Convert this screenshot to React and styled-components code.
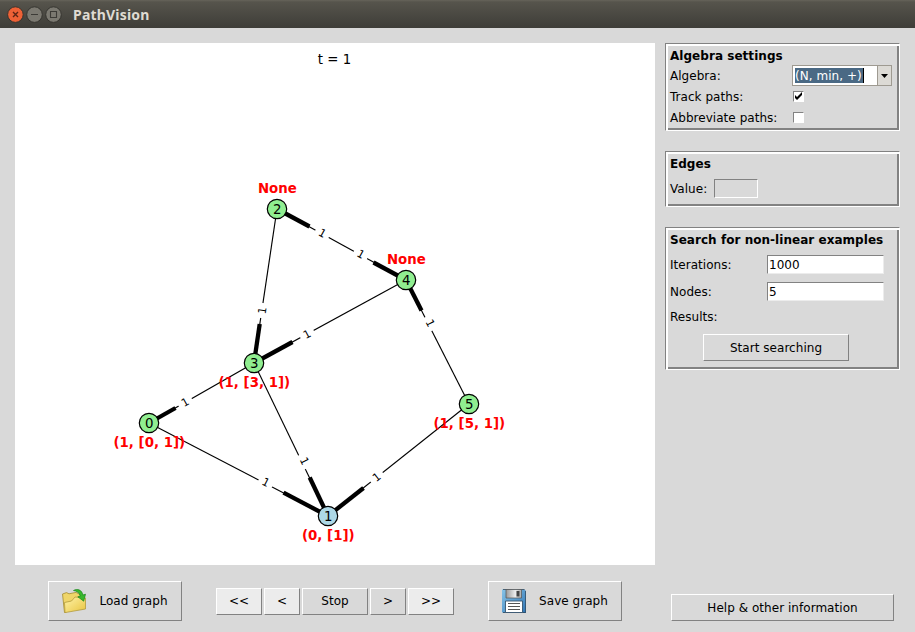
import React from "react";
import styled, { createGlobalStyle } from "styled-components";

const Global = createGlobalStyle`
  * { box-sizing: border-box; }
  body { margin: 0; background: #d9d9d9; overflow: hidden; }
  button, input { font: inherit; color: inherit; letter-spacing: inherit; border-radius: 0; margin: 0; padding: 0; }
`;

const Window = styled.div`
  width: 915px;
  height: 632px;
  display: flex;
  flex-direction: column;
  background: #d9d9d9;
  color: #000;
  font: 12px/16px "DejaVu Sans", sans-serif;
  letter-spacing: 0.04px;
  white-space: nowrap;
`;

const TitleBar = styled.header`
  height: 28px;
  flex: none;
  display: flex;
  align-items: center;
  padding-left: 7px;
  background: linear-gradient(#66635a 0, #56544c 2px, #3e3d38 100%);
`;

const WindowControls = styled.svg`
  width: 56px;
  height: 18px;
  flex: none;
  position: relative;
  top: 1px;
`;

const Title = styled.h1`
  margin: 0 0 0 10px;
  font: bold 14px/20px "Noto Sans", sans-serif;
  letter-spacing: 0.2px;
  color: #dfdbd2;
  position: relative;
  top: 1px;
`;

const Body = styled.main`
  flex: 1;
  display: grid;
  grid-template-columns: 640px 235px;
  grid-template-rows: 522px 1fr;
  column-gap: 10px;
  padding: 15px 15px 0 15px;
`;

const Canvas = styled.svg`
  display: block;
  width: 640px;
  height: 522px;
  background: #fff;
  font-family: "DejaVu Sans", sans-serif;
  letter-spacing: 0;
`;

const Sidebar = styled.aside`
  display: flex;
  flex-direction: column;
`;

const Panel = styled.section`
  height: ${(p) => p.$height}px;
  margin-bottom: ${(p) => p.$gap || 0}px;
  padding: 4px 4px 0;
  border: 1px solid;
  border-color: #828282 #fff #fff #828282;
  box-shadow: inset 2px 2px #fff, inset -2px -2px #828282;
`;

const PanelTitle = styled.h2`
  margin: 0;
  font: bold 12px/16px "DejaVu Sans", sans-serif;
`;

const Field = styled.div`
  display: grid;
  grid-template-columns: ${(p) => p.$label}px 1fr;
  align-items: center;
  height: ${(p) => p.$height}px;
`;

const Combo = styled.div`
  display: flex;
  width: 100px;
  height: 21px;
  border: 1px solid #9e9a91;
  background: #fff;
`;

const ComboValue = styled.div`
  flex: 1;
  padding: 2px 0 0 2px;
`;

const Selection = styled.span`
  display: block;
  width: 69px;
  height: 15px;
  line-height: 16px;
  color: #fff;
  background: #4a6984;
  border-right: 1px solid #000;
`;

const ComboArrow = styled.div`
  width: 14px;
  display: flex;
  align-items: center;
  justify-content: center;
  background: #dcdad5;
  border-left: 1px solid #9e9a91;
`;

const Check = styled.span`
  width: 11px;
  height: 11px;
  display: flex;
  background: #fff;
  border: 1px solid;
  border-color: #828282 #fff #fff #828282;
`;

const Entry = styled.input`
  width: ${(p) => p.$width}px;
  height: 19px;
  outline: none;
  padding-left: 1px;
  background: ${(p) => (p.$disabled ? "#d9d9d9" : "#fff")};
  border: 1px solid;
  border-color: ${(p) =>
    p.$disabled ? "#828282 #fff #fff #828282" : "#828282 #ececec #ececec #828282"};
`;

const Button = styled.button`
  display: flex;
  align-items: center;
  justify-content: center;
  gap: 13px;
  width: ${(p) => p.$width}px;
  height: ${(p) => p.$height || 27}px;
  background: ${(p) => (p.$active ? "#ececec" : "#d9d9d9")};
  border: 1px solid;
  border-color: #fff #828282 #828282 #fff;
`;

const SearchAction = styled.div`
  padding: 2px 0 0 33px;
`;

const Controls = styled.div`
  display: flex;
  align-items: center;
  height: 40px;
  margin: 16px 0 0 33px;
`;

const Steps = styled.div`
  display: flex;
  gap: 2px;
  margin: 0 34px;
`;

const HelpArea = styled.div`
  padding: 29px 0 0 6px;
`;

const Icon = styled.svg`
  width: 24px;
  height: 24px;
`;

const nodes = [
  { id: 0, x: 149, y: 423, label: "(1, [0, 1])", ly: 447 },
  { id: 1, x: 328, y: 516, label: "(0, [1])", ly: 540, source: true },
  { id: 2, x: 277, y: 209, label: "None", ly: 193 },
  { id: 3, x: 254, y: 363, label: "(1, [3, 1])", ly: 387 },
  { id: 4, x: 406, y: 280, label: "None", ly: 264 },
  { id: 5, x: 469, y: 404, label: "(1, [5, 1])", ly: 428 },
];

const edges = [
  { from: 2, to: 4, heads: [[2, 309.5, 226.5], [4, 373.5, 262.5]], marks: [[322.5, 233], [361, 254]] },
  { from: 3, to: 2, heads: [[3, 259.7, 324]], marks: [[262, 310.5]] },
  { from: 3, to: 4, heads: [[3, 292.5, 342]], marks: [[307, 334]] },
  { from: 0, to: 3, heads: [[0, 175.5, 408]], marks: [[185, 402]] },
  { from: 0, to: 1, heads: [[1, 283.5, 492.7]], marks: [[266, 482]] },
  { from: 3, to: 1, heads: [[1, 309.7, 477.5]], marks: [[304.5, 461]] },
  { from: 4, to: 5, heads: [[4, 421.5, 310.5]], marks: [[430.5, 323]] },
  { from: 1, to: 5, heads: [[1, 363.5, 488]], marks: [[376.5, 477]] },
];

function Edge({ edge }) {
  const a = nodes[edge.from];
  const b = nodes[edge.to];
  const angle = (Math.atan2(b.y - a.y, b.x - a.x) * 180) / Math.PI;
  return (
    <g>
      <line x1={a.x} y1={a.y} x2={b.x} y2={b.y} stroke="#000" strokeWidth="1.15" />
      {edge.heads.map(([id, x, y]) => (
        <line key={id} x1={nodes[id].x} y1={nodes[id].y} x2={x} y2={y} stroke="#000" strokeWidth="4.3" />
      ))}
      {edge.marks.map(([x, y]) => (
        <g key={x} transform={`translate(${x} ${y}) rotate(${angle})`}>
          <rect x="-7.6" y="-7" width="15.2" height="14" fill="#fff" />
          <text y="4" fontSize="11" textAnchor="middle">1</text>
        </g>
      ))}
    </g>
  );
}

function Graph() {
  return (
    <Canvas viewBox="15 43 640 522">
      <text x="334.5" y="64" fontSize="13.33" textAnchor="middle">t = 1</text>
      {edges.map((e) => <Edge key={`${e.from}-${e.to}`} edge={e} />)}
      {nodes.map((n) => (
        <g key={n.id} textAnchor="middle" fontSize="13.33">
          <circle cx={n.x} cy={n.y} r="9.7" fill={n.source ? "#add8e6" : "#90ee90"} stroke="#000" strokeWidth="1.2" />
          <text x={n.x + 0.3} y={n.y + 4.5}>{n.id}</text>
          <text x={n.x + 0.3} y={n.ly} fill="#f00" fontWeight="bold">{n.label}</text>
        </g>
      ))}
    </Canvas>
  );
}

function FolderIcon() {
  return (
    <Icon viewBox="0 0 24 24">
      <defs>
        <linearGradient id="folder" x1="0" y1="0" x2="1" y2="1">
          <stop offset="0" stopColor="#fff3a8" />
          <stop offset="1" stopColor="#e8c440" />
        </linearGradient>
      </defs>
      <path d="M.5 5 4.5 3.6l2.5 1.2L14 3.4l5 2.6v12L2.5 23.5Z" fill="#efd569" stroke="#a58b30" strokeWidth=".8" />
      <path d="M2.5 13.5 9.5 12l3.5-4L23.5 9v11L3 23.6Z" fill="url(#folder)" stroke="#b39a3b" strokeWidth=".8" />
      <path d="M11.5 1.5C15-.6 20 .6 20.8 6l2.7-.8-1.8 7L15.8 7.8l2.5-.6C17.5 3.5 14.8 2 11.5 1.5Z" fill="#39b82c" stroke="#17851a" strokeWidth=".7" />
    </Icon>
  );
}

function FloppyIcon() {
  return (
    <Icon viewBox="0 0 24 24">
      <defs>
        <linearGradient id="floppy" x1="0" y1="0" x2="1" y2="1">
          <stop offset="0" stopColor="#87c4e8" />
          <stop offset="1" stopColor="#2f75b5" />
        </linearGradient>
        <linearGradient id="shutter">
          <stop offset="0" stopColor="#999" />
          <stop offset=".6" stopColor="#eee" />
          <stop offset="1" stopColor="#aaa" />
        </linearGradient>
      </defs>
      <path d="M0 .5h22.5L24 2v22H1l-1-1Z" fill="url(#floppy)" />
      <path d="M1 .5h21.5M23.6 2v21.5H1" fill="none" stroke="#30475c" strokeWidth=".8" />
      <path d="M4 .5h15.5V9H4Z" fill="url(#shutter)" stroke="#555" strokeWidth=".7" />
      <path d="M14.5 2h3v5.5h-3Z" fill="#444" />
      <path d="M3.5 12h17v11.5h-17Z" fill="#fff" stroke="#35536e" strokeWidth=".9" />
      <path d="M6 14.5h12M6 17.5h12M6 20.5h12" stroke="#555" />
    </Icon>
  );
}

function TitleControls() {
  return (
    <WindowControls viewBox="0 0 56 18">
      <circle cx="8.4" cy="8.6" r="7.8" fill="#ee6136" stroke="#35342f" />
      <circle cx="27.5" cy="8.6" r="7.8" fill="#7b7971" stroke="#35342f" />
      <circle cx="46.5" cy="8.6" r="7.8" fill="#7b7971" stroke="#35342f" />
      <path d="m6 6 5 5m0-5-5 5" stroke="#5d2515" strokeWidth="1.4" />
      <path d="M24 8.5h7M43.5 5.5h6v6h-6Z" fill="none" stroke="#3c3b37" strokeWidth="1.1" />
    </WindowControls>
  );
}

export default function App() {
  return (
    <Window>
      <Global />
      <TitleBar>
        <TitleControls />
        <Title>PathVision</Title>
      </TitleBar>
      <Body>
        <Graph />
        <Sidebar>
          <Panel $height={88} $gap={20}>
            <PanelTitle>Algebra settings</PanelTitle>
            <Field $label={122} $height={23}>
              <span>Algebra:</span>
              <Combo>
                <ComboValue><Selection>(N, min, +)</Selection></ComboValue>
                <ComboArrow>
                  <svg width="7" height="4" viewBox="0 0 7 4"><path d="M0 0h7L3.5 4Z" /></svg>
                </ComboArrow>
              </Combo>
            </Field>
            <Field $label={123} $height={19}>
              <span>Track paths:</span>
              <Check>
                <svg width="9" height="9" viewBox="0 0 9 9"><path d="M1 3v3l2 2 5-5V0L3 5Z" /></svg>
              </Check>
            </Field>
            <Field $label={123} $height={23}>
              <span>Abbreviate paths:</span>
              <Check />
            </Field>
          </Panel>
          <Panel $height={56} $gap={20}>
            <PanelTitle>Edges</PanelTitle>
            <Field $label={44} $height={33}>
              <span>Value:</span>
              <Entry $width={44} $disabled readOnly />
            </Field>
          </Panel>
          <Panel $height={143}>
            <PanelTitle>Search for non-linear examples</PanelTitle>
            <Field $label={97} $height={33}>
              <span>Iterations:</span>
              <Entry $width={117} defaultValue="1000" />
            </Field>
            <Field $label={97} $height={21}>
              <span>Nodes:</span>
              <Entry $width={117} defaultValue="5" />
            </Field>
            <Field $label={97} $height={30}>
              <span>Results:</span>
            </Field>
            <SearchAction>
              <Button $width={146}>Start searching</Button>
            </SearchAction>
          </Panel>
        </Sidebar>
        <Controls>
          <Button $width={134} $height={40}><FolderIcon />Load graph</Button>
          <Steps>
            <Button $width={46} $active>&lt;&lt;</Button>
            <Button $width={36} $active>&lt;</Button>
            <Button $width={66}>Stop</Button>
            <Button $width={36}>&gt;</Button>
            <Button $width={46} $active>&gt;&gt;</Button>
          </Steps>
          <Button $width={134} $height={40}><FloppyIcon />Save graph</Button>
        </Controls>
        <HelpArea>
          <Button $width={223}>Help &amp; other information</Button>
        </HelpArea>
      </Body>
    </Window>
  );
}
